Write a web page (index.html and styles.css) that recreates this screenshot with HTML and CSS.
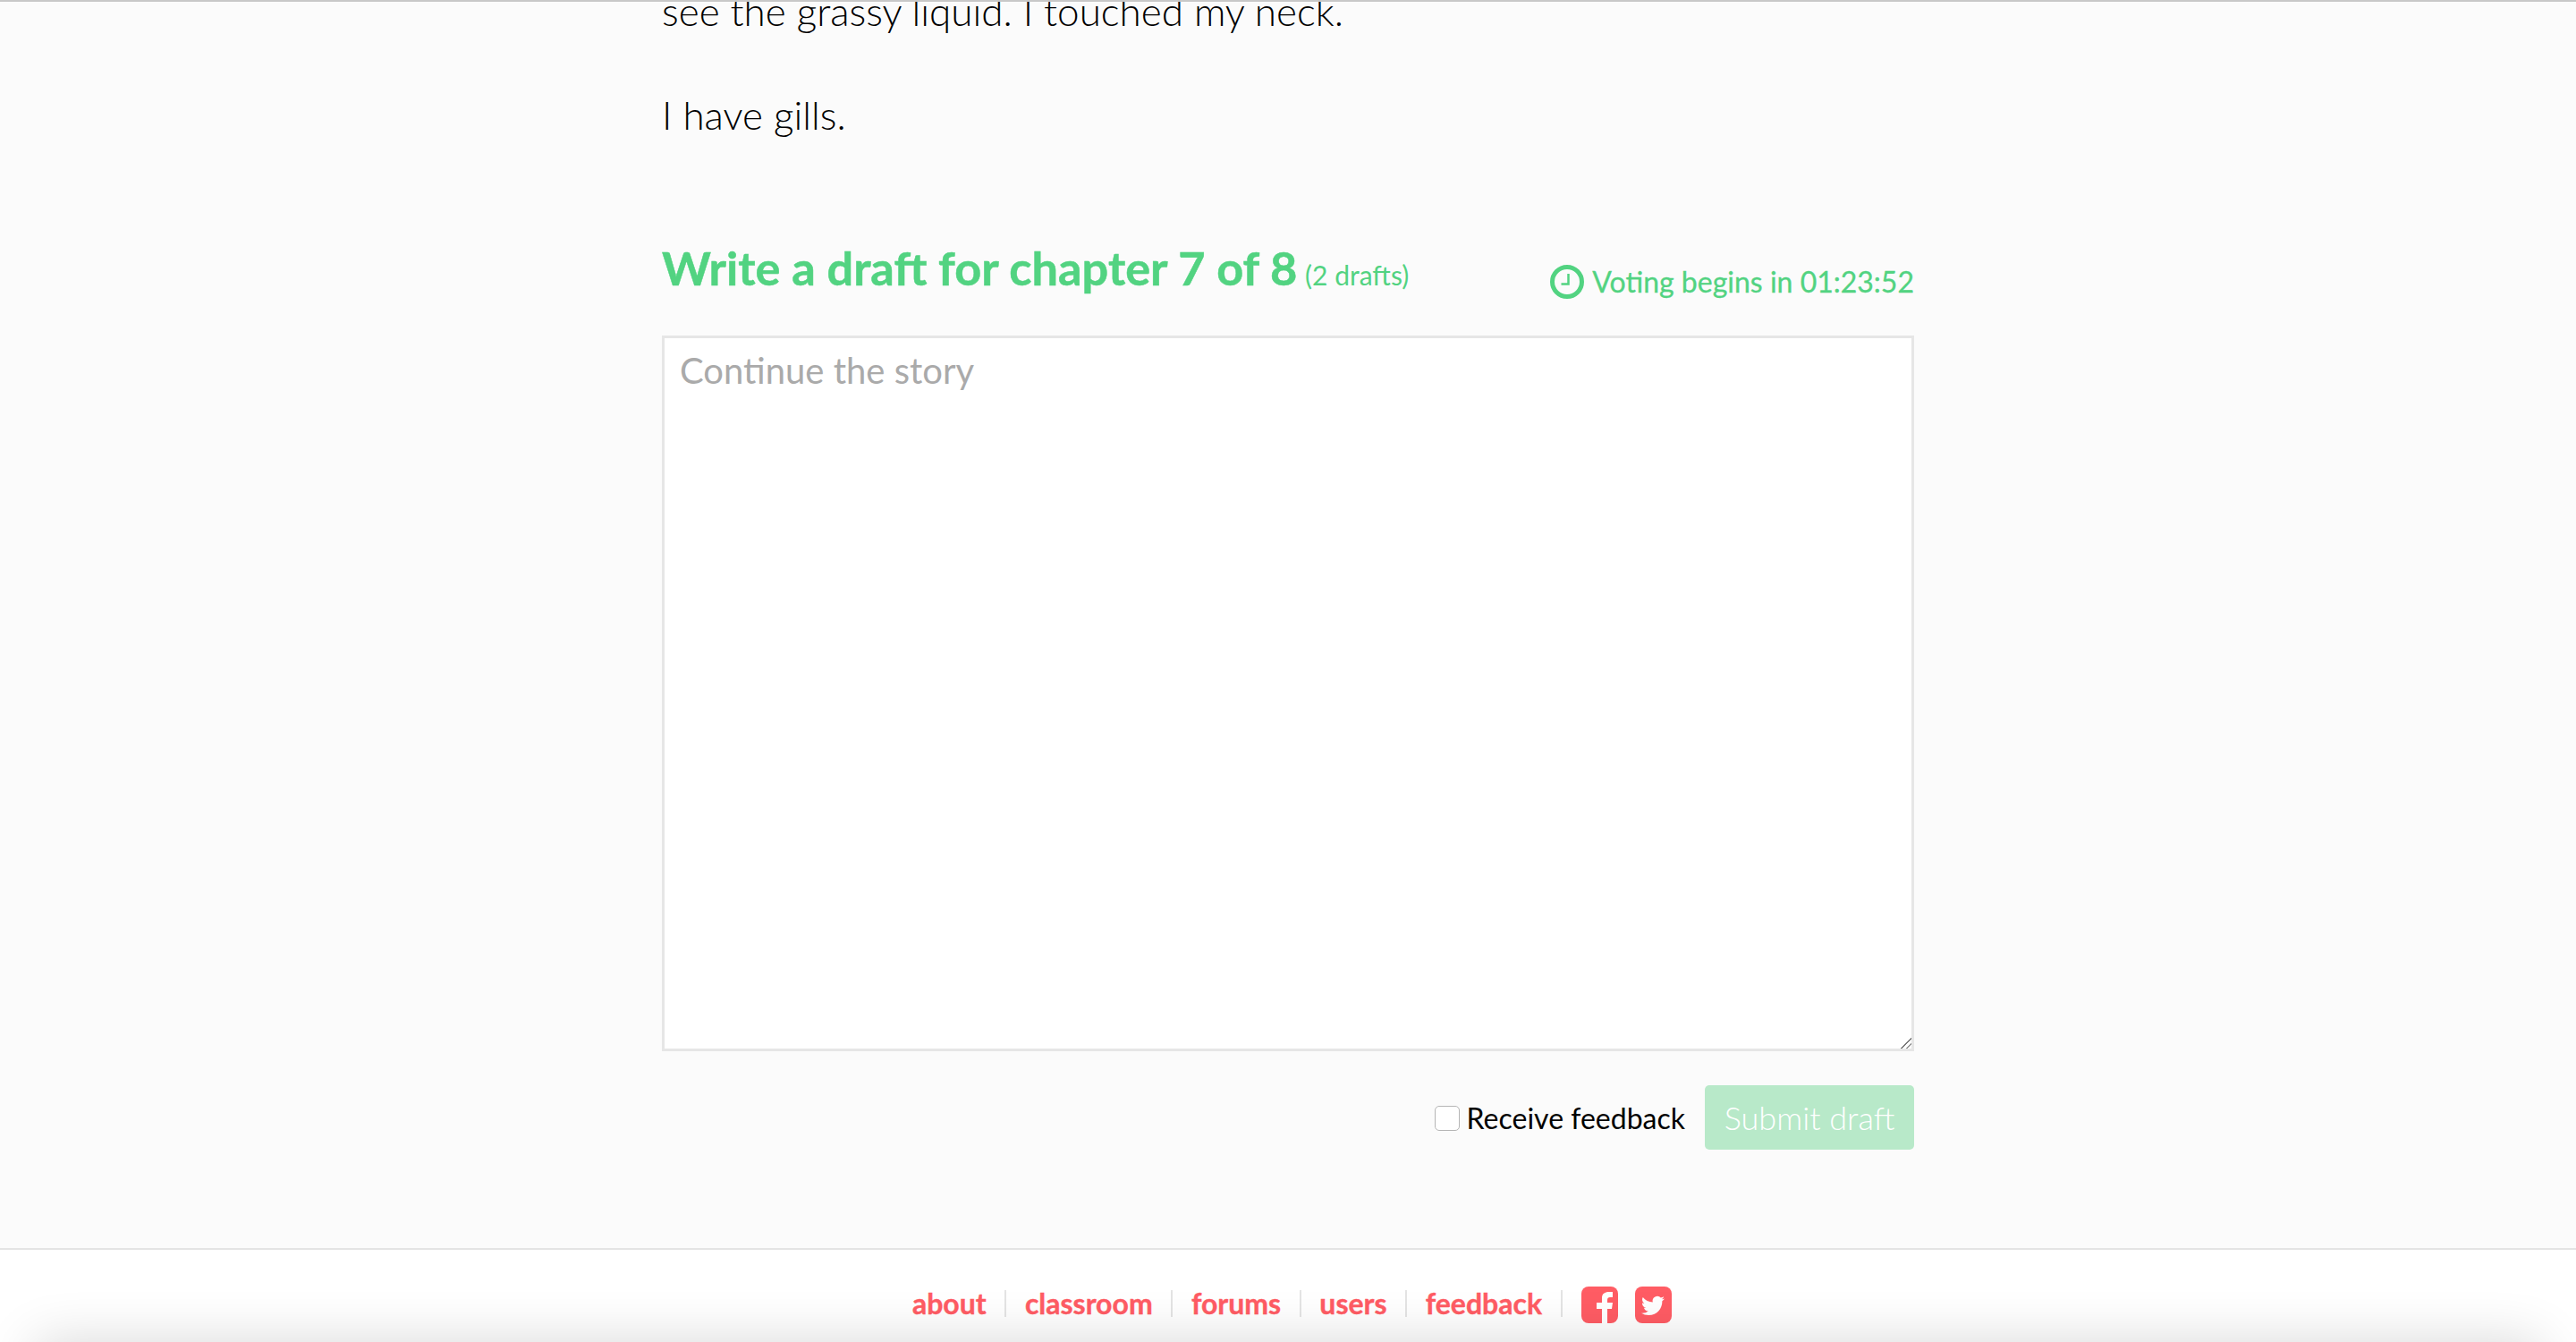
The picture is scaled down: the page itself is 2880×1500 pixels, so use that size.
FILE: index.html
```html
<!DOCTYPE html>
<html lang="en">
<head>
    <meta charset="UTF-8">
    <title>Write a draft</title>
    <link rel="stylesheet" href="styles.css">
</head>
<body>
    <div class="top-line"></div>
    <main class="container">
        <div class="story">
            <p>see the grassy liquid. I touched my neck.</p>
            <p>I have gills.</p>
        </div>

        <div class="draft-header">
            <h2>Write a draft for chapter 7 of 8 <small>(2 drafts)</small></h2>
            <div class="timer">
                <svg class="clock" viewBox="0 0 38 38">
                    <circle cx="19" cy="19" r="16.500" fill="none" stroke="#52d381" stroke-width="5"/>
                    <path d="M20.500 10v11.500h-8" fill="none" stroke="#52d381" stroke-width="2.500"/>
                </svg>
                <span>Voting begins in 01:23:52</span>
            </div>
        </div>

        <textarea class="draft-text" placeholder="Continue the story"></textarea>

        <div class="submit-row">
            <label class="feedback"><input type="checkbox"> Receive feedback</label>
            <button class="submit-btn" disabled>Submit draft</button>
        </div>
    </main>

    <footer class="footer">
        <nav class="footer-links">
            <a href="#">about</a>
            <a href="#">classroom</a>
            <a href="#">forums</a>
            <a href="#">users</a>
            <a href="#">feedback</a>
        </nav>
        <div class="social">
            <svg class="social-icon" viewBox="0 0 41 41">
                <rect width="41" height="41" rx="8" fill="#ff5c64"/>
                <path fill="#fff" d="M23 41V25h-6v-7h6v-5c0-5 3-7 8-7h4v6h-3c-2 0-3 1-3 3v3h6l-1 7h-5v16z"/>
            </svg>
            <svg class="social-icon" viewBox="0 0 41 41">
                <rect width="41" height="41" rx="8" fill="#ff5c64"/>
                <path fill="#fff" transform="translate(7 8.500) scale(1.083)" d="M23.953 4.570a10 10 0 0 1-2.825.775 4.958 4.958 0 0 0 2.163-2.723c-.951.555-2.005.959-3.127 1.184a4.920 4.920 0 0 0-8.384 4.482C7.690 8.095 4.067 6.130 1.640 3.162a4.822 4.822 0 0 0-.666 2.475c0 1.710.870 3.213 2.188 4.096a4.904 4.904 0 0 1-2.228-.616v.060a4.923 4.923 0 0 0 3.946 4.827 4.996 4.996 0 0 1-2.212.085 4.936 4.936 0 0 0 4.604 3.417 9.867 9.867 0 0 1-6.102 2.105c-.390 0-.779-.023-1.170-.067a13.995 13.995 0 0 0 7.557 2.209c9.053 0 13.998-7.496 13.998-13.985 0-.210 0-.420-.015-.630A9.935 9.935 0 0 0 24 4.590z"/>
            </svg>
        </div>
    </footer>
    <div class="window-shadow"></div>
</body>
</html>
```

FILE: styles.css
```css
html, body {
    height: 1500px;
    overflow: hidden;
}
body {
    margin: 0;
    font-family: Lato, sans-serif;
    background-color: #fbfbfb;
    color: #000;
    display: flex;
    flex-direction: column;
    position: relative;
}
.top-line {
    height: 2px;
    background-color: #c8c8c8;
    position: relative;
    z-index: 1;
}
.container {
    width: 1400px;
    height: 1393px;
    margin: 0 auto;
}
.story {
    margin-top: -19px;
    font-size: 44px;
    font-weight: 300;
    line-height: 58px;
}
.story p {
    margin: 0 0 58px 0;
}
.draft-header {
    display: flex;
    justify-content: space-between;
    align-items: flex-end;
    margin-top: 110px;
    margin-bottom: 36px;
    color: #52d381;
}
.draft-header h2 {
    margin: 0;
    font-size: 52.3px;
    font-weight: 700;
    line-height: 64px;
    -webkit-text-stroke: 0.5px #52d381;
}
.draft-header small {
    margin-left: -4px;
    font-size: 30px;
    font-weight: 400;
    -webkit-text-stroke: 0;
}
.timer {
    display: flex;
    align-items: center;
    gap: 9px;
    padding-bottom: 2px;
    font-size: 32px;
    line-height: 44px;
    -webkit-text-stroke: 0.3px #52d381;
}
.clock {
    width: 38px;
    height: 38px;
}
.draft-text {
    display: block;
    width: 100%;
    height: 800px;
    box-sizing: border-box;
    padding: 12px 17px;
    border: 3px solid #e6e6e6;
    background-color: #fff;
    font-family: Lato, sans-serif;
    font-size: 40px;
    line-height: 48px;
    outline: none;
}
.draft-text::placeholder {
    color: #aaa;
}
.draft-text::-webkit-resizer {
    background: linear-gradient(135deg, transparent 58%, #777 58%, #777 66%, transparent 66%, transparent 78%, #999 78%, #999 85%, transparent 85%);
}
.submit-row {
    display: flex;
    justify-content: flex-end;
    align-items: center;
    gap: 22px;
    margin-top: 38px;
}
.feedback {
    display: flex;
    align-items: center;
    gap: 8px;
    font-size: 32px;
}
.feedback input {
    appearance: none;
    width: 28px;
    height: 28px;
    margin: 1px 0 0 0;
    background-color: #fff;
    border: 1px solid #b5b5b5;
    border-radius: 5px;
}
.submit-btn {
    width: 234px;
    height: 72px;
    padding: 0;
    border: none;
    border-radius: 5px;
    background-color: #b8e9c9;
    color: #fff;
    font-family: Lato, sans-serif;
    font-size: 36px;
    font-weight: 300;
}
.footer {
    flex: 1;
    display: flex;
    justify-content: center;
    align-items: flex-start;
    padding-top: 40px;
    padding-right: 12px;
    background-color: #fff;
    border-top: 2px solid #e4e4e4;
}
.footer-links {
    display: flex;
    margin-top: 5px;
}
.footer-links a {
    padding: 0 20.600px;
    border-right: 2px solid #e4e4e4;
    color: #ff5c64;
    font-size: 32px;
    font-weight: 700;
    line-height: 30px;
    height: 30px;
    text-decoration: none;
    -webkit-text-stroke: 0.4px #ff5c64;
}
.social {
    display: flex;
    gap: 19px;
    margin-left: 21px;
    margin-top: 1px;
}
.social-icon {
    width: 41px;
    height: 41px;
}
.window-shadow {
    position: absolute;
    left: 40px;
    right: 40px;
    bottom: -60px;
    height: 60px;
    box-shadow: 0 0 60px rgba(0, 0, 0, 0.16);
}
```
